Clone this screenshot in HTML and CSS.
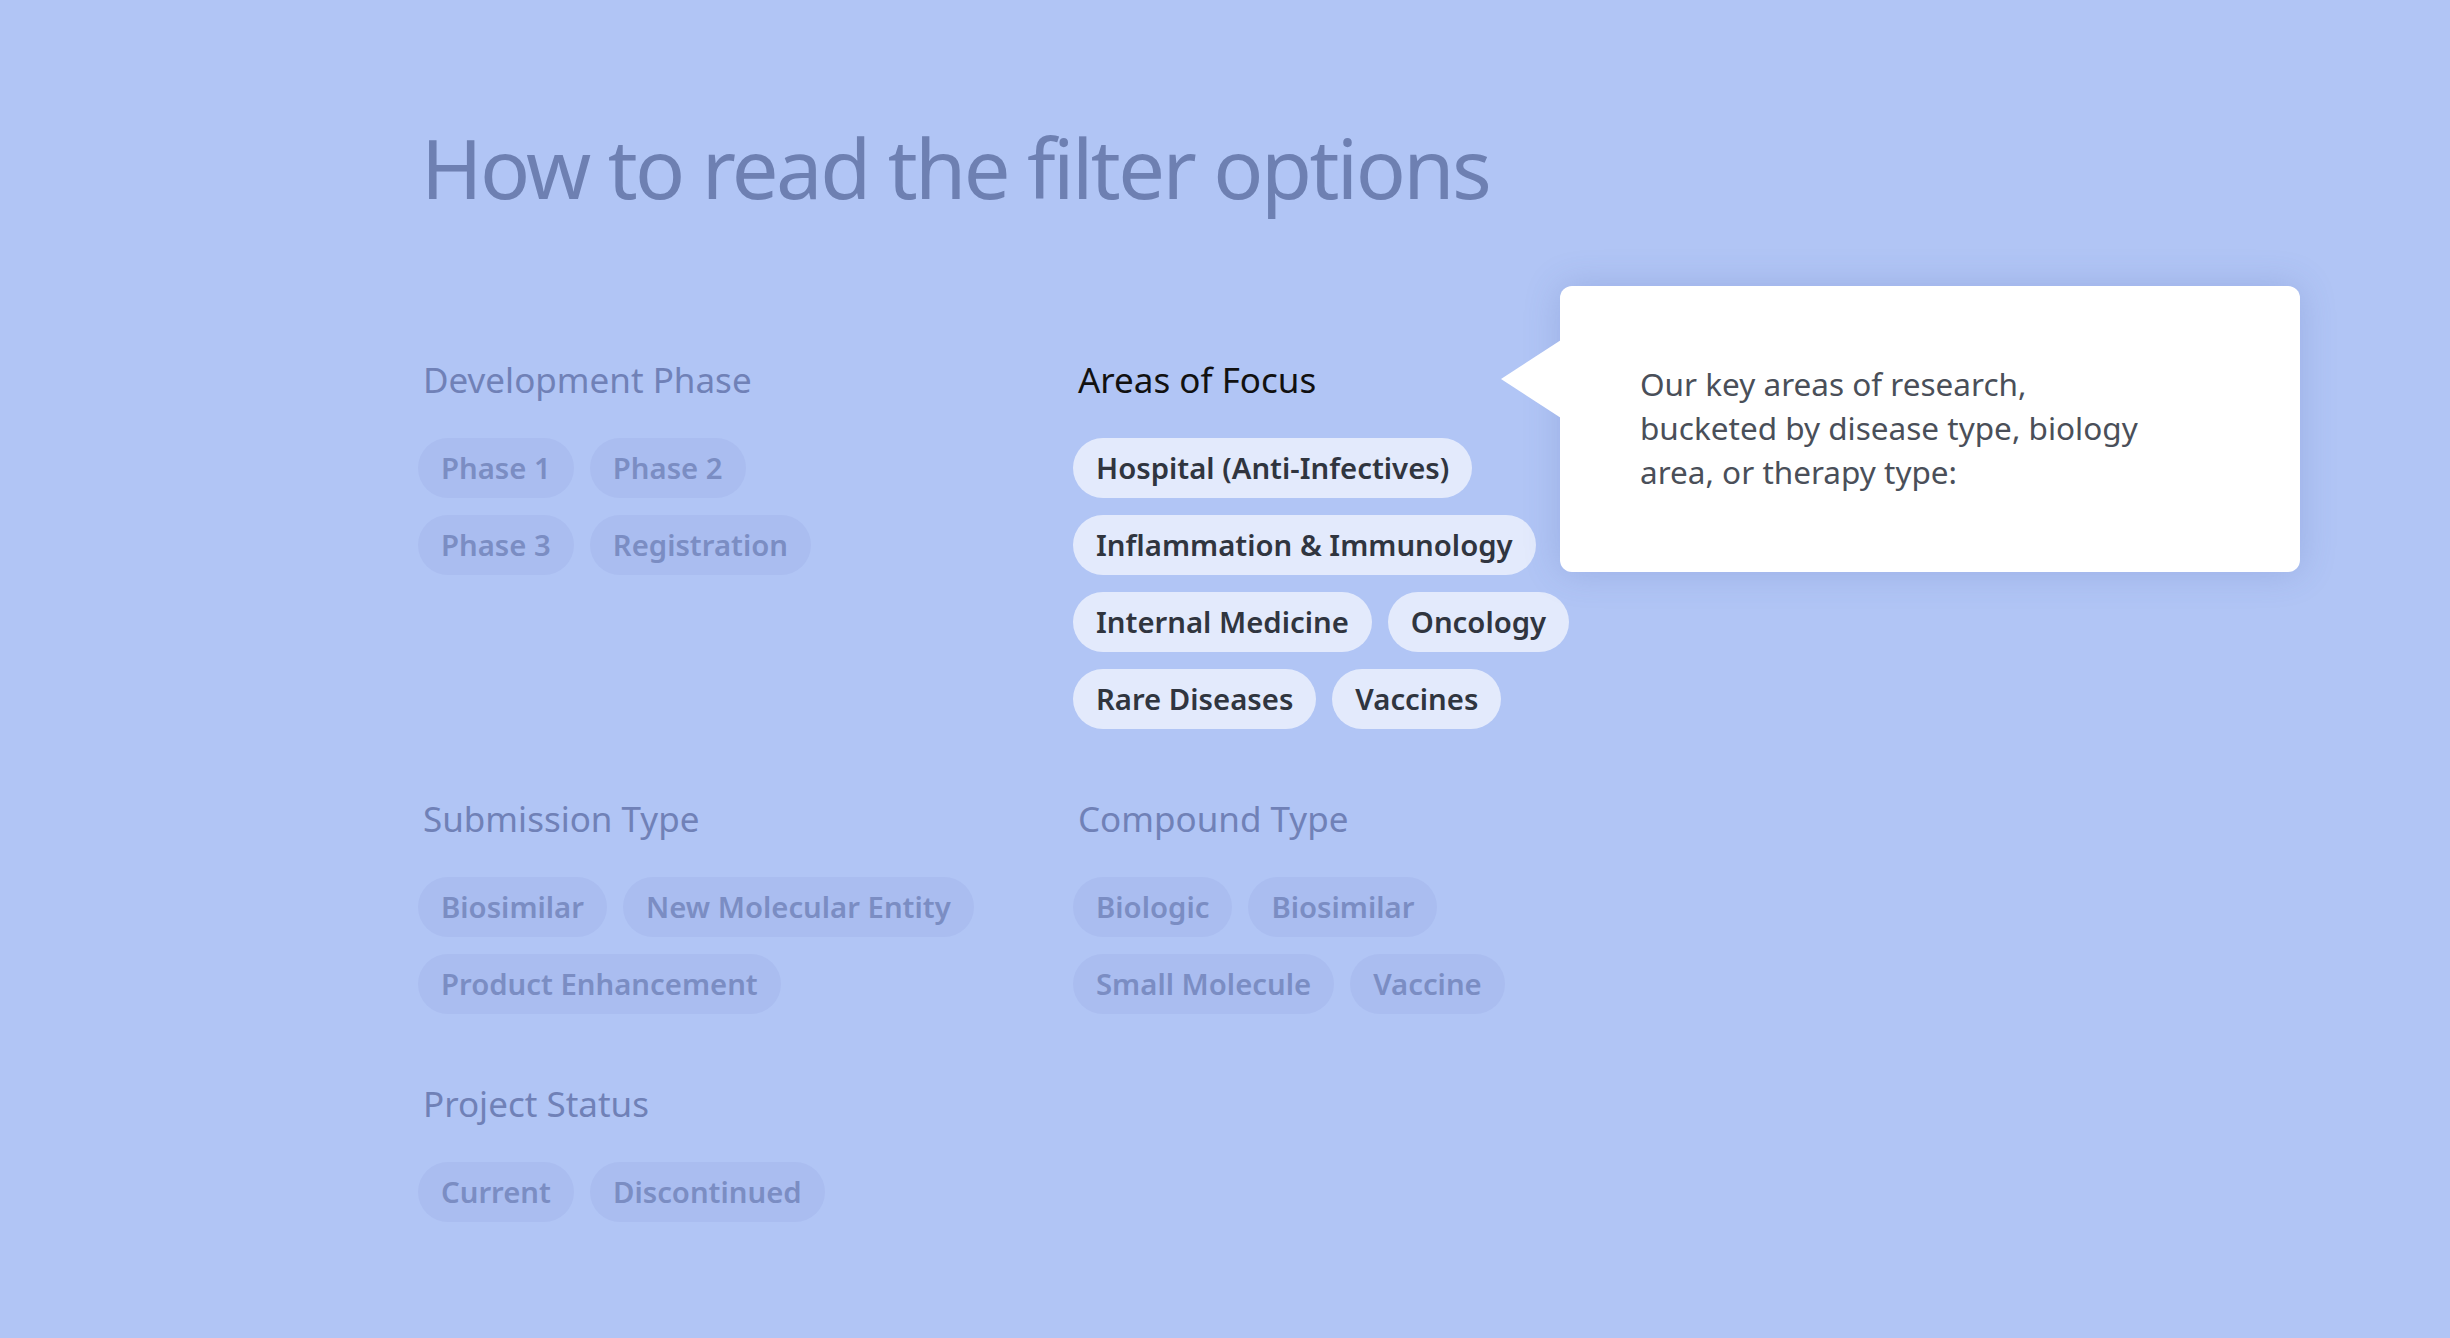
FILE: index.html
```html
<!DOCTYPE html>
<html lang="en">
<head>
<meta charset="utf-8">
<title>How to read the filter options</title>
<link rel="stylesheet" href="styles.css">
</head>
<body>
<main class="page">
  <h1 class="title">How to read the filter options</h1>
  <div class="grid">
    <section class="group">
      <h2 class="label">Development Phase</h2>
      <div class="chips">
        <div class="chip-row"><span class="chip">Phase 1</span><span class="chip">Phase 2</span></div>
        <div class="chip-row"><span class="chip">Phase 3</span><span class="chip">Registration</span></div>
      </div>
    </section>
    <section class="group group-active">
      <h2 class="label label-active">Areas of Focus</h2>
      <div class="chips">
        <div class="chip-row"><span class="chip chip-active">Hospital (Anti-Infectives)</span></div>
        <div class="chip-row"><span class="chip chip-active">Inflammation &amp; Immunology</span></div>
        <div class="chip-row"><span class="chip chip-active">Internal Medicine</span><span class="chip chip-active">Oncology</span></div>
        <div class="chip-row"><span class="chip chip-active">Rare Diseases</span><span class="chip chip-active">Vaccines</span></div>
      </div>
      <div class="tooltip">
        <p class="tooltip-text">Our key areas of research,<br>bucketed by disease type, biology<br>area, or therapy type:</p>
      </div>
    </section>
    <section class="group">
      <h2 class="label">Submission Type</h2>
      <div class="chips">
        <div class="chip-row"><span class="chip">Biosimilar</span><span class="chip">New Molecular Entity</span></div>
        <div class="chip-row"><span class="chip">Product Enhancement</span></div>
      </div>
    </section>
    <section class="group">
      <h2 class="label">Compound Type</h2>
      <div class="chips">
        <div class="chip-row"><span class="chip">Biologic</span><span class="chip">Biosimilar</span></div>
        <div class="chip-row"><span class="chip">Small Molecule</span><span class="chip">Vaccine</span></div>
      </div>
    </section>
    <section class="group">
      <h2 class="label">Project Status</h2>
      <div class="chips">
        <div class="chip-row"><span class="chip">Current</span><span class="chip">Discontinued</span></div>
      </div>
    </section>
  </div>
</main>
</body>
</html>
```
FILE: styles.css
```css
html, body {
  margin: 0;
  padding: 0;
}
body {
  background: #b1c5f5;
  font-family: "Noto Sans", "Open Sans", "DejaVu Sans", sans-serif;
  min-height: 1338px;
}
.page {
  padding: 117px 0 0 423px;
}
.title {
  margin: 0 0 0 -2px;
  font-size: 83px;
  line-height: 100px;
  font-weight: 400;
  letter-spacing: -2.55px;
  color: #6e80b2;
}
.grid {
  display: grid;
  grid-template-columns: 655px 655px;
  row-gap: 66px;
  margin-top: 139px;
}
.group {
  position: relative;
}
.label {
  margin: 0;
  font-size: 35px;
  line-height: 48px;
  font-weight: 400;
  color: #7081b7;
}
.label-active {
  color: #111111;
}
.chips {
  display: flex;
  flex-direction: column;
  gap: 17px;
  margin: 34px 0 0 -5px;
}
.chip-row {
  display: flex;
  gap: 16px;
}
.chip {
  display: inline-block;
  height: 60px;
  line-height: 60px;
  padding: 0 23px;
  border-radius: 30px;
  font-size: 29.3px;
  font-weight: 600;
  background: #aabdf0;
  color: #7b8dc3;
  white-space: nowrap;
}
.chip-active {
  background: #e3eafc;
  color: #30353f;
}
.tooltip {
  position: absolute;
  left: 482px;
  top: -70px;
  width: 740px;
  height: 286px;
  box-sizing: border-box;
  background: #ffffff;
  border-radius: 12px;
  box-shadow: 0 0 36px rgba(70, 90, 170, 0.22);
  padding: 76px 0 0 80px;
}
.tooltip::before {
  content: "";
  position: absolute;
  left: -59px;
  top: 54px;
  border-right: 60px solid #ffffff;
  border-top: 39px solid transparent;
  border-bottom: 39px solid transparent;
}
.tooltip-text {
  margin: 0;
  font-size: 31.5px;
  line-height: 44px;
  color: #4a4f59;
}
```
